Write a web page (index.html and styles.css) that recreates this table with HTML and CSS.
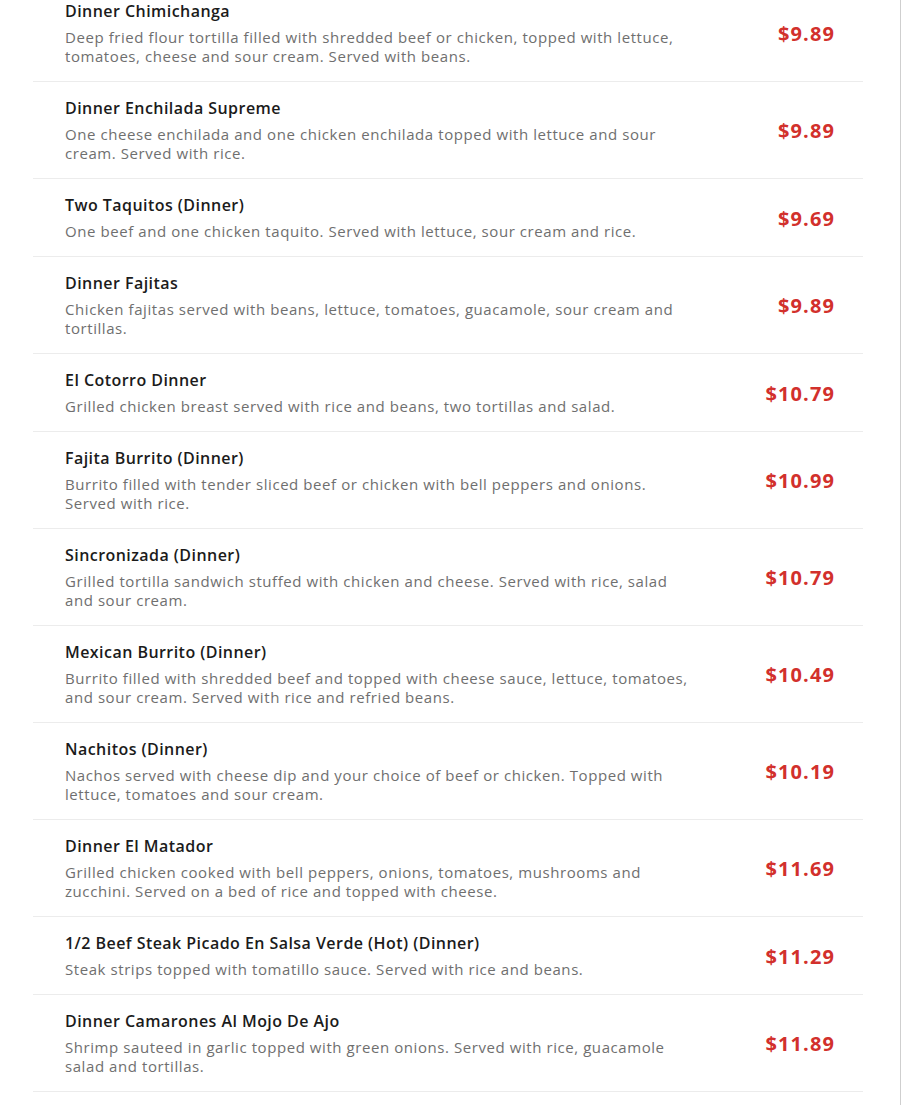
FILE: index.html
```html
<!DOCTYPE html>
<html>
<head>
<meta charset="utf-8">
<link rel="stylesheet" href="styles.css">
</head>
<body>
<div class="page">
  <div class="menu">
    <div class="item">
      <div class="info">
        <div class="name">Dinner Chimichanga</div>
        <div class="desc">Deep fried flour tortilla filled with shredded beef or chicken, topped with lettuce, tomatoes, cheese and sour cream. Served with beans.</div>
      </div>
      <div class="price">$9.89</div>
    </div>
    <div class="item">
      <div class="info">
        <div class="name">Dinner Enchilada Supreme</div>
        <div class="desc">One cheese enchilada and one chicken enchilada topped with lettuce and sour cream. Served with rice.</div>
      </div>
      <div class="price">$9.89</div>
    </div>
    <div class="item">
      <div class="info">
        <div class="name">Two Taquitos (Dinner)</div>
        <div class="desc">One beef and one chicken taquito. Served with lettuce, sour cream and rice.</div>
      </div>
      <div class="price">$9.69</div>
    </div>
    <div class="item">
      <div class="info">
        <div class="name">Dinner Fajitas</div>
        <div class="desc">Chicken fajitas served with beans, lettuce, tomatoes, guacamole, sour cream and tortillas.</div>
      </div>
      <div class="price">$9.89</div>
    </div>
    <div class="item">
      <div class="info">
        <div class="name">El Cotorro Dinner</div>
        <div class="desc">Grilled chicken breast served with rice and beans, two tortillas and salad.</div>
      </div>
      <div class="price">$10.79</div>
    </div>
    <div class="item">
      <div class="info">
        <div class="name">Fajita Burrito (Dinner)</div>
        <div class="desc">Burrito filled with tender sliced beef or chicken with bell peppers and onions. Served with rice.</div>
      </div>
      <div class="price">$10.99</div>
    </div>
    <div class="item">
      <div class="info">
        <div class="name">Sincronizada (Dinner)</div>
        <div class="desc">Grilled tortilla sandwich stuffed with chicken and cheese. Served with rice, salad and sour cream.</div>
      </div>
      <div class="price">$10.79</div>
    </div>
    <div class="item">
      <div class="info">
        <div class="name">Mexican Burrito (Dinner)</div>
        <div class="desc">Burrito filled with shredded beef and topped with cheese sauce, lettuce, tomatoes, and sour cream. Served with rice and refried beans.</div>
      </div>
      <div class="price">$10.49</div>
    </div>
    <div class="item">
      <div class="info">
        <div class="name">Nachitos (Dinner)</div>
        <div class="desc">Nachos served with cheese dip and your choice of beef or chicken. Topped with lettuce, tomatoes and sour cream.</div>
      </div>
      <div class="price">$10.19</div>
    </div>
    <div class="item">
      <div class="info">
        <div class="name">Dinner El Matador</div>
        <div class="desc">Grilled chicken cooked with bell peppers, onions, tomatoes, mushrooms and zucchini. Served on a bed of rice and topped with cheese.</div>
      </div>
      <div class="price">$11.69</div>
    </div>
    <div class="item">
      <div class="info">
        <div class="name">1/2 Beef Steak Picado En Salsa Verde (Hot) (Dinner)</div>
        <div class="desc">Steak strips topped with tomatillo sauce. Served with rice and beans.</div>
      </div>
      <div class="price">$11.29</div>
    </div>
    <div class="item">
      <div class="info">
        <div class="name">Dinner Camarones Al Mojo De Ajo</div>
        <div class="desc">Shrimp sauteed in garlic topped with green onions. Served with rice, guacamole salad and tortillas.</div>
      </div>
      <div class="price">$11.89</div>
    </div>
  </div>
</div>
</body>
</html>
```

FILE: styles.css
```css
html, body {
  margin: 0;
  padding: 0;
  background: #ffffff;
  overflow: hidden;
  height: 1105px;
}
.page {
  width: 900px;
  height: 1105px;
  border-right: 1px solid #cfcfcf;
  box-sizing: content-box;
  overflow: hidden;
}
.menu {
  margin: -15px 0 0 33px;
  width: 830px;
}
.item {
  display: flex;
  align-items: center;
  justify-content: space-between;
  padding: 16px 28px 15px 32px;
  border-bottom: 1px solid #ececec;
}
.info {
  width: 632px;
  display: flex;
  flex-direction: column;
  gap: 7px;
}
.name {
  font-family: "Open Sans", sans-serif;
  font-size: 16px;
  line-height: 20px;
  font-weight: 600;
  letter-spacing: 0.45px;
  color: #1b1b1b;
}
.desc {
  font-family: "Open Sans", sans-serif;
  font-size: 15px;
  line-height: 19px;
  letter-spacing: 0.57px;
  color: #6f6f6f;
}
.price {
  font-family: "Open Sans", sans-serif;
  font-size: 20px;
  font-weight: 700;
  letter-spacing: 1.1px;
  color: #d2302c;
}
```
